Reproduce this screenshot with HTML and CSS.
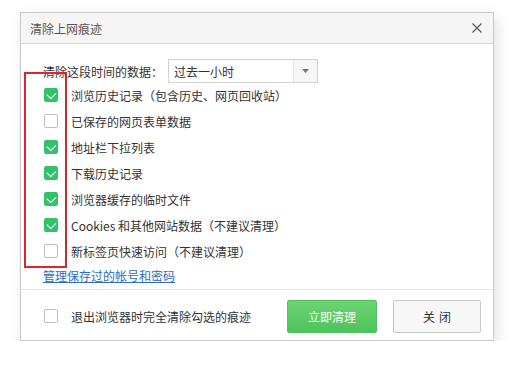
FILE: index.html
```html
<!DOCTYPE html>
<html lang="zh-CN">
<head>
<meta charset="utf-8">
<link rel="stylesheet" href="styles.css">
</head>
<body>
<div class="dialog">
  <div class="header">
    <span class="title">清除上网痕迹</span>
    <svg class="close" width="10" height="10" viewBox="0 0 10 10"><path d="M0.5 0.5L9.5 9.5M9.5 0.5L0.5 9.5" stroke="#555" stroke-width="1.1" fill="none"/></svg>
  </div>
  <div class="content">
    <div class="range">
      <span class="range-label">清除这段时间的数据：</span>
      <div class="select">
        <span class="select-value">过去一小时</span>
        <span class="select-arrow"><svg width="7" height="4" viewBox="0 0 7 4"><path d="M0 0H7L3.5 4Z" fill="#777"/></svg></span>
      </div>
    </div>
    <div class="list">
      <div class="row"><span class="cb on"></span><span>浏览历史记录（包含历史、网页回收站）</span></div>
      <div class="row"><span class="cb"></span><span>已保存的网页表单数据</span></div>
      <div class="row"><span class="cb on"></span><span>地址栏下拉列表</span></div>
      <div class="row"><span class="cb on"></span><span>下载历史记录</span></div>
      <div class="row"><span class="cb on"></span><span>浏览器缓存的临时文件</span></div>
      <div class="row"><span class="cb on"></span><span>Cookies 和其他网站数据（不建议清理）</span></div>
      <div class="row"><span class="cb"></span><span>新标签页快速访问（不建议清理）</span></div>
    </div>
    <a class="link" href="#">管理保存过的帐号和密码</a>
  </div>
  <div class="footer">
    <div class="row foot-check"><span class="cb"></span><span>退出浏览器时完全清除勾选的痕迹</span></div>
    <div class="buttons">
      <button class="btn primary">立即清理</button>
      <button class="btn"><span class="gap">关</span>闭</button>
    </div>
  </div>
  <div class="highlight"></div>
</div>
</body>
</html>
```
FILE: styles.css
```css
html, body {
  margin: 0;
  padding: 0;
  background: #fff;
}
body {
  font-family: "Noto Sans CJK SC", "Microsoft YaHei", sans-serif;
  font-size: 12px;
  color: #333;
  padding: 12px 0 0 20px;
}
.dialog {
  position: relative;
  width: 472px;
  height: 327px;
  border: 1px solid #c9c9c9;
  background: #fff;
  box-shadow: 3px 5px 14px rgba(0, 0, 0, 0.12);
  display: flex;
  flex-direction: column;
}
.header {
  height: 30px;
  background: #f5f5f5;
  border-bottom: 1px solid #d6d6d6;
  display: flex;
  align-items: center;
  justify-content: space-between;
  padding: 0 10px 0 9px;
}
.title {
  color: #555;
  font-size: 12px;
}
.close {
  margin-right: 1px;
}
.content {
  flex: 1;
  padding: 15px 0 0 22px;
  display: flex;
  flex-direction: column;
}
.range {
  display: flex;
  align-items: center;
  height: 24px;
}
.range-label {
  width: 125px;
}
.select {
  width: 148px;
  height: 22px;
  border: 1px solid #d2d2d2;
  display: flex;
  align-items: center;
  background: #fff;
}
.select-value {
  flex: 1;
  padding-left: 5px;
}
.select-arrow {
  width: 23px;
  height: 22px;
  border-left: 1px solid #e2e2e2;
  background: #f7f7f7;
  display: flex;
  align-items: center;
  justify-content: center;
}
.list {
  display: flex;
  flex-direction: column;
  margin-top: -1px;
}
.row {
  display: flex;
  align-items: center;
  height: 26px;
}
.cb {
  box-sizing: border-box;
  width: 14px;
  height: 14px;
  border: 1px solid #bdbdbd;
  border-radius: 2px;
  background: #fff;
  margin: 0 13px 0 1px;
  flex: none;
  position: relative;
}
.cb.on {
  border-color: #2fc46a;
  background: #2fc46a;
}
.cb.on::after {
  content: "";
  position: absolute;
  left: 3px;
  top: 1px;
  width: 5px;
  height: 7px;
  border: solid #fff;
  border-width: 0 1.5px 1.5px 0;
  transform: rotate(45deg) translate(0.5px, 0);
}
.link {
  color: #2a6cc8;
  text-decoration: underline;
  margin-top: 3px;
  line-height: 18px;
}
.footer {
  height: 50px;
  border-top: 1px solid #e6e6e6;
  display: flex;
  align-items: center;
  justify-content: space-between;
  padding: 0 12px 0 22px;
}
.foot-check {
  margin-top: 2px;
}
.buttons {
  display: flex;
  gap: 16px;
  margin-top: 2px;
}
.btn {
  font-family: inherit;
  font-size: 12px;
  height: 33px;
  width: 88px;
  border: 1px solid #c9c9c9;
  border-radius: 2px;
  background: #f7f7f7;
  color: #333;
  padding: 0;
}
.gap {
  margin-right: 4px;
}
.btn.primary {
  width: 90px;
  border-color: #4cc25e;
  background: linear-gradient(#6dd474, #4cc35b);
  color: #fff;
  font-size: 12px;
}
.highlight {
  position: absolute;
  left: 3px;
  top: 59px;
  width: 39px;
  height: 192px;
  border: 2px solid #d8262d;
}
```
